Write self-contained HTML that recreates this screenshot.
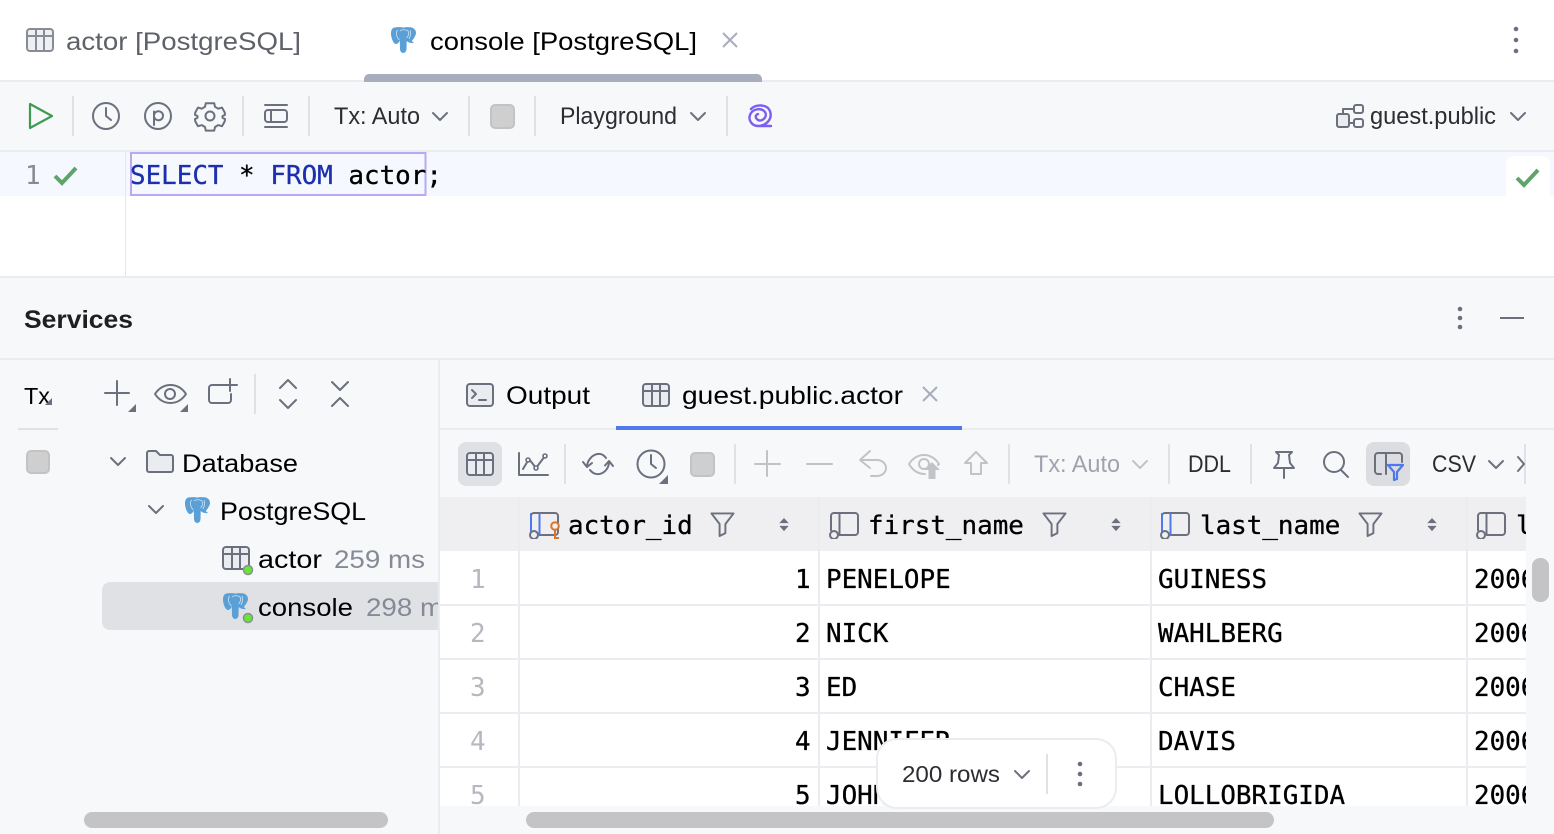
<!DOCTYPE html>
<html><head><meta charset="utf-8"><title>console</title>
<style>
html,body{margin:0;padding:0;background:#fff;width:1554px;height:834px;overflow:hidden}
svg{display:block}
.u{font-family:"Liberation Sans",sans-serif;font-size:25px}
.t{font-family:"Liberation Sans",sans-serif;font-size:24.5px;fill:#2b2d30}
.m{font-family:"DejaVu Sans Mono","Liberation Mono",monospace;font-size:25.9px;fill:#000;stroke:#000;stroke-width:.3}
.n{font-family:"DejaVu Sans Mono","Liberation Mono",monospace;font-size:25.9px;fill:#b6b8c0}
.i{fill:none;stroke:#6c707e;stroke-width:2;stroke-linecap:round;stroke-linejoin:round}
.d{fill:none;stroke:#c2c3c6;stroke-width:2;stroke-linecap:round;stroke-linejoin:round}
.sep{stroke:#dfe1e5;stroke-width:2}
</style></head>
<body>
<svg width="1554" height="834" viewBox="0 0 1554 834" xmlns="http://www.w3.org/2000/svg">
<defs>
<symbol id="el" viewBox="0 0 25 26">
<path fill="#5a9fd6" d="M6 .3C2 0 0 2 0 6.500 0 11 2.500 17 5 17 7 17 8 15 8.800 13.500L9 22c.2 5.300 6.300 5.300 6.500 0l.2-8c2 2 5 2.500 7.500 2-1.200-.6-2-1.500-2.300-2.300C23 11.500 25 8 25 6 25 2.500 22 0 18.500.3 16 0 14 0 12.500.6 10.500 0 8.500 0 6 .3z"/>
<path fill="none" stroke="#cfe3f4" stroke-width=".8" d="M6.500 3c-2 3-1 7.500 2 10M9 4c1.500-1.500 6-1.800 8 0 1.500 2 .5 5-1.500 7M19 3c1.500 3 .5 6-1 9"/>
</symbol>
<symbol id="tb" viewBox="0 0 28 24">
<rect x="1" y="1" width="26" height="22" rx="3" fill="#ebecf0" stroke="#6c707e" stroke-width="2"/>
<path d="M1 8h26M10 1v22M18 1v22" stroke="#6c707e" stroke-width="2" fill="none"/>
</symbol>
<symbol id="col" viewBox="0 0 32 28">
<path d="M4 20V5a3 3 0 0 1 3-3h21a3 3 0 0 1 3 3v16a3 3 0 0 1-3 3H12" fill="none" stroke="#6c707e" stroke-width="2"/>
<path d="M12.500 2v22" fill="none" stroke="#6c707e" stroke-width="2"/>
<circle cx="7" cy="24" r="4" fill="#efeff1" stroke="#6c707e" stroke-width="2"/>
</symbol>
<symbol id="fl" viewBox="0 0 26 26">
<path d="M1.500 1.500h23L16 12.500v9.500l-6 3V12.500z" fill="none" stroke="#6c707e" stroke-width="2" stroke-linejoin="round"/>
</symbol>
<symbol id="so" viewBox="0 0 12 16">
<path d="M6 1l5 5.500H1zM6 15l5-5.500H1z" fill="#6c707e"/>
</symbol>
</defs>

<!-- top tabs -->
<rect width="1554" height="834" fill="#fff"/>
<rect y="80" width="1554" height="2" fill="#ebecf0"/>
<use href="#tb" x="26" y="28" width="28" height="24" opacity=".8"/>
<text class="u" x="66" y="50" fill="#5f6169" textLength="235" lengthAdjust="spacingAndGlyphs">actor [PostgreSQL]</text>
<use href="#el" x="391" y="27" width="25" height="26"/>
<text class="u" x="430" y="50" fill="#000" textLength="267" lengthAdjust="spacingAndGlyphs">console [PostgreSQL]</text>
<path d="M723 33l14 14M737 33l-14 14" stroke="#a8adbd" stroke-width="2" fill="none"/>
<path d="M364 82v-3a5 5 0 0 1 5-5h388a5 5 0 0 1 5 5v3z" fill="#a8adbd"/>
<g fill="#6c707e"><circle cx="1516" cy="29" r="2.300"/><circle cx="1516" cy="40" r="2.300"/><circle cx="1516" cy="51" r="2.300"/></g>

<!-- editor toolbar -->
<rect y="82" width="1554" height="68" fill="#f7f8fa"/>
<rect y="150" width="1554" height="2" fill="#ebecf0"/>
<path d="M30 104l22 12-22 12z" fill="none" stroke="#3f9a52" stroke-width="2.200" stroke-linejoin="round"/>
<g class="sep"><path d="M73 96v40M243 96v40M309 96v40M469 96v40M535 96v40M727 96v40"/></g>
<circle class="i" cx="106" cy="116" r="13"/><path class="i" d="M106 108v8l5 4"/>
<circle class="i" cx="158" cy="116" r="13"/><path class="i" d="M154 125v-13.500M154 115.500a4.500 4.500 0 1 1 0 .5"/>
<path class="i" d="M205.800 103.200l-.8 3.600-3.200 1.900-3.800-1.100-1.200 2.100-1.600 3-.2 2.100 2.500 1.200v1.800l-2.500 1.200 .2 2.100 1.600 3 1.200 2.100 3.800-1.100 3.200 1.900.8 3.600h8.400l.8-3.600 3.200-1.900 3.800 1.100 1.200-2.100 1.600-3 .2-2.100-2.500-1.200v-1.800l2.500-1.200-.2-2.100-1.600-3-1.200-2.100-3.800 1.100-3.200-1.900-.8-3.600z"/>
<circle class="i" cx="210" cy="116" r="4.500"/>
<path class="i" d="M265 105h22M265 127h22"/><rect class="i" x="265" y="110" width="22" height="12" rx="3"/><path class="i" d="M271 110v12"/>
<text class="t" x="334" y="124" textLength="86" lengthAdjust="spacingAndGlyphs">Tx: Auto</text>
<path class="i" d="M433 113l7 7 7-7"/>
<rect x="491" y="105" width="23" height="23" rx="4" fill="#cfcfcf" stroke="#c2c3c6" stroke-width="2"/>
<text class="t" x="560" y="124" textLength="117" lengthAdjust="spacingAndGlyphs">Playground</text>
<path class="i" d="M691 113l7 7 7-7"/>
<path d="M751 109C756 104 767 104 770 111 773 120 765 126 758 126 752 126 748 120 750 115 752 109 761 107 765 112 768 117 762 122 758 120 755 118 755 115 758 114M758 126L771 126" fill="none" stroke="#7c5ef0" stroke-width="2.400" stroke-linecap="round"/>
<g class="i"><rect x="1337" y="114" width="12" height="13" rx="2" fill="#ebecf0" style="fill:#ebecf0"/><rect x="1354" y="105" width="9" height="8" rx="2"/><rect x="1354" y="119" width="9" height="8" rx="2"/><path d="M1343 114v-5h11M1349 123h5"/></g>
<text class="t" x="1370" y="124" textLength="126" lengthAdjust="spacingAndGlyphs">guest.public</text>
<path class="i" d="M1511 113l7 7 7-7"/>

<!-- editor -->
<rect y="152" width="1554" height="44" fill="#f5f8fe"/>
<rect x="125" y="152" width="1" height="124" fill="#e6e7ea"/>
<text class="n" x="25" y="184" style="fill:#868a91">1</text>
<path d="M55 176l7 7 14-15" fill="none" stroke="#5fa469" stroke-width="4"/>
<rect x="131" y="153" width="294.500" height="42" fill="none" stroke="#b9a9f2" stroke-width="2"/>
<text class="m" x="130" y="184" style="fill:#1c2fae;stroke:#1c2fae">SELECT</text>
<text class="m" x="239" y="184">*</text>
<text class="m" x="270.400" y="184" style="fill:#1c2fae;stroke:#1c2fae">FROM</text>
<text class="m" x="348.400" y="184">actor</text>
<text class="m" x="426.400" y="184">;</text>
<path d="M1506 196v-32a8 8 0 0 1 8-8h28a8 8 0 0 1 8 8v32z" fill="#fff"/>
<path d="M1517 178l7 7 14-15" fill="none" stroke="#5fa469" stroke-width="4"/>

<!-- services header -->
<rect y="276" width="1554" height="558" fill="#f7f8fa"/>
<rect y="276" width="1554" height="2" fill="#ebecf0"/>
<rect y="358" width="1554" height="2" fill="#ebecf0"/>
<text class="u" x="24" y="328" fill="#1e1f22" font-weight="700" textLength="109" lengthAdjust="spacingAndGlyphs">Services</text>
<g fill="#6c707e"><circle cx="1460" cy="309" r="2.300"/><circle cx="1460" cy="318" r="2.300"/><circle cx="1460" cy="327" r="2.300"/></g>
<path d="M1500 318h24" stroke="#6c707e" stroke-width="2"/>

<!-- left panel -->
<text class="t" x="24" y="404" textLength="26" lengthAdjust="spacingAndGlyphs" style="fill:#000;font-size:23px">Tx</text>
<path d="M52 398v7h-7z" fill="#6c707e"/>
<rect x="18" y="428" width="40" height="2" fill="#dfe1e5"/>
<path class="i" d="M105 393h24M117 381v24"/><path d="M136 404v8h-8z" fill="#6c707e"/>
<path class="i" d="M155 394c8-12 23-12 31 0-8 12-23 12-31 0z"/><circle class="i" cx="170" cy="394" r="5"/><path d="M188 404v8h-8z" fill="#6c707e"/>
<path class="i" d="M226 385h-14a3 3 0 0 0-3 3v12a3 3 0 0 0 3 3h16a3 3 0 0 0 3-3v-6M230 379v12M224 385h13"/>
<path class="sep" d="M255 374v40"/>
<path class="i" d="M280 388l8-8 8 8M280 400l8 8 8-8"/>
<path class="i" d="M332 382l8 8 8-8M332 406l8-8 8 8"/>
<rect x="27" y="451" width="22" height="22" rx="4" fill="#cfcfcf" stroke="#c2c3c6" stroke-width="2"/>
<path class="i" d="M111 458l7 7 7-7"/>
<path class="i" style="fill:#ebecf0" d="M147 470v-17a2 2 0 0 1 2-2h7l4 4h11a2 2 0 0 1 2 2v13a2 2 0 0 1-2 2h-22a2 2 0 0 1-2-2z"/>
<text class="u" x="182" y="472" fill="#000" textLength="116" lengthAdjust="spacingAndGlyphs">Database</text>
<path class="i" d="M149 506l7 7 7-7"/>
<use href="#el" x="185" y="497" width="25" height="26"/>
<text class="u" x="220" y="520" fill="#000" textLength="146" lengthAdjust="spacingAndGlyphs">PostgreSQL</text>
<use href="#tb" x="222" y="546" width="28" height="24"/>
<circle cx="248" cy="570" r="4.500" fill="#66e832" stroke="#8a8d96" stroke-width="1.500"/>
<text class="u" x="258" y="568" fill="#000" textLength="64" lengthAdjust="spacingAndGlyphs">actor</text>
<text class="u" x="334" y="568" fill="#868a96" textLength="91" lengthAdjust="spacingAndGlyphs">259 ms</text>
<path d="M110 582h330v48H110a8 8 0 0 1-8-8v-32a8 8 0 0 1 8-8z" fill="#dfe1e5"/>
<use href="#el" x="223" y="593" width="25" height="26"/>
<circle cx="248" cy="618" r="4.500" fill="#66e832" stroke="#8a8d96" stroke-width="1.500"/>
<text class="u" x="258" y="616" fill="#000" textLength="95" lengthAdjust="spacingAndGlyphs">console</text>
<text class="u" x="366" y="616" fill="#868a96" textLength="91" lengthAdjust="spacingAndGlyphs">298 ms</text>
<rect x="84" y="812" width="304" height="16" rx="8" fill="#c4c4c6"/>

<!-- right panel -->
<rect x="438" y="360" width="1116" height="474" fill="#f7f8fa"/>
<rect x="438" y="360" width="2" height="474" fill="#ebecf0"/>
<rect x="440" y="428" width="1114" height="2" fill="#ebecf0"/>
<rect x="616" y="426" width="346" height="4" fill="#4f78ec"/>
<rect class="i" x="467" y="384" width="26" height="22" rx="3" style="fill:#ebecf0"/><path class="i" d="M472 390l4 4-4 4M479 400h7"/>
<text class="u" x="506" y="404" fill="#000" textLength="84" lengthAdjust="spacingAndGlyphs">Output</text>
<use href="#tb" x="642" y="383" width="28" height="24"/>
<text class="u" x="682" y="404" fill="#000" textLength="221" lengthAdjust="spacingAndGlyphs">guest.public.actor</text>
<path d="M923 387l14 14M937 387l-14 14" stroke="#a8adbd" stroke-width="2" fill="none"/>

<!-- right toolbar -->
<rect x="458" y="442" width="44" height="44" rx="8" fill="#dfe1e5"/>
<use href="#tb" x="466" y="452" width="28" height="24"/>
<path class="i" d="M519 453v22h29M523 469l6-10 7 9 9-12"/><g fill="#f7f8fa" stroke="#6c707e" stroke-width="1.600"><circle cx="528" cy="460" r="2"/><circle cx="536" cy="468" r="2"/><circle cx="545" cy="456" r="2"/></g>
<g class="sep"><path d="M565 444v40M735 444v40M1009 444v40M1169 444v40M1251 444v40M1525 444v40"/></g>
<path class="i" d="M583 462l4 5 5-4M587 466C588 456 600 449 606 458M613 466l-4-5-4 4.500M609 462C609 472 597 479 590 470"/>
<circle class="i" cx="651" cy="464" r="13.500"/><path class="i" d="M651 455v9l5 4"/><path d="M668 475v9h-9z" fill="#6c707e"/>
<rect x="691" y="453" width="23" height="23" rx="4" fill="#cfcfcf" stroke="#c2c3c6" stroke-width="2"/>
<path class="d" d="M755 464h25M767 451v25M807 464h25"/>
<path class="d" d="M870 451l-10 9 10 8M860 460h17a9 8 0 0 1 0 16h-6"/>
<path class="d" d="M909 464c8-12 22-12 30 0l-1 1M909 464c4 7 10 10 16 10"/><circle class="d" cx="924" cy="464" r="5"/>
<path d="M932 462l8 8h-4.500v9h-7v-9H924z" fill="#c2c3c6"/>
<path class="d" d="M976 452l11 11h-6v11h-10v-11h-6z"/>
<text class="t" x="1034" y="472" style="fill:#a0a3ad" textLength="86" lengthAdjust="spacingAndGlyphs">Tx: Auto</text>
<path class="d" d="M1133 461l7 7 7-7"/>
<text class="t" x="1188" y="472" textLength="43" lengthAdjust="spacingAndGlyphs">DDL</text>
<path class="i" d="M1276 452h16l-3 3 1 8 4 5h-20l4-5 1-8zM1284 468v10"/>
<circle class="i" cx="1334" cy="462" r="10"/><path class="i" d="M1341 470l7 7"/>
<rect x="1366" y="442" width="44" height="44" rx="8" fill="#dcdde0"/>
<path class="i" d="M1381 474h-3a3 3 0 0 1-3-3v-15a3 3 0 0 1 3-3h21a3 3 0 0 1 3 3v6M1386 453v21"/>
<path d="M1388 465h15l-6 7v7l-3 1v-8z" fill="#dcdde0" stroke="#4f78ec" stroke-width="2.200" stroke-linejoin="round"/>
<text class="t" x="1432" y="472" textLength="44" lengthAdjust="spacingAndGlyphs">CSV</text>
<path class="i" d="M1489 461l7 7 7-7"/>
<path class="i" d="M1518 457l6 7-6 7"/>

<!-- table -->
<rect x="440" y="497" width="1086" height="309" fill="#fff"/>
<rect x="440" y="497" width="1086" height="54" fill="#efeff1"/>
<g fill="#ebecf0">
<rect x="518" y="497" width="2" height="309"/><rect x="818" y="497" width="2" height="309"/><rect x="1150" y="497" width="2" height="309"/><rect x="1466" y="497" width="2" height="309"/>
<rect x="440" y="604" width="1086" height="2"/><rect x="440" y="658" width="1086" height="2"/><rect x="440" y="712" width="1086" height="2"/><rect x="440" y="766" width="1086" height="2"/>
</g>
<!-- header -->
<use href="#col" x="527" y="511" width="32" height="28"/>
<path d="M531 513v19M539.500 513v22" stroke="#4f78ec" stroke-width="2" fill="none"/>
<circle cx="555" cy="526" r="3.800" fill="#efeff1" stroke="#d9762c" stroke-width="2"/><path d="M555 530v9M555 538h4" stroke="#d9762c" stroke-width="2" fill="none"/>
<text class="m" x="568" y="534">actor_id</text>
<use href="#fl" x="710" y="512" width="25" height="25"/>
<use href="#so" x="778" y="517" width="12" height="15"/>
<use href="#col" x="827" y="511" width="32" height="28"/>
<text class="m" x="868" y="534">first_name</text>
<use href="#fl" x="1042" y="512" width="25" height="25"/>
<use href="#so" x="1110" y="517" width="12" height="15"/>
<use href="#col" x="1158" y="511" width="32" height="28"/>
<path d="M1162 513v19M1170.500 513v22" stroke="#4f78ec" stroke-width="2" fill="none"/>
<text class="m" x="1200" y="534">last_name</text>
<use href="#fl" x="1358" y="512" width="25" height="25"/>
<use href="#so" x="1426" y="517" width="12" height="15"/>
<use href="#col" x="1474" y="511" width="32" height="28"/>
<text class="m" x="1516" y="534">last_update</text>
<!-- rows -->
<text class="n" x="470" y="588">1</text><text class="m" x="795" y="588">1</text><text class="m" x="826" y="588">PENELOPE</text><text class="m" x="1158" y="588">GUINESS</text><text class="m" x="1474" y="588">2006-02-15</text>
<text class="n" x="470" y="642">2</text><text class="m" x="795" y="642">2</text><text class="m" x="826" y="642">NICK</text><text class="m" x="1158" y="642">WAHLBERG</text><text class="m" x="1474" y="642">2006-02-15</text>
<text class="n" x="470" y="696">3</text><text class="m" x="795" y="696">3</text><text class="m" x="826" y="696">ED</text><text class="m" x="1158" y="696">CHASE</text><text class="m" x="1474" y="696">2006-02-15</text>
<text class="n" x="470" y="750">4</text><text class="m" x="795" y="750">4</text><text class="m" x="826" y="750">JENNIFER</text><text class="m" x="1158" y="750">DAVIS</text><text class="m" x="1474" y="750">2006-02-15</text>
<text class="n" x="470" y="804">5</text><text class="m" x="795" y="804">5</text><text class="m" x="826" y="804">JOHNNY</text><text class="m" x="1158" y="804">LOLLOBRIGIDA</text><text class="m" x="1474" y="804">2006-02-15</text>
<!-- clip masks -->
<rect x="1526" y="497" width="28" height="337" fill="#f7f8fa"/>
<rect x="440" y="806" width="1114" height="28" fill="#f7f8fa"/>
<rect x="1532" y="558" width="17" height="44" rx="8" fill="#c4c4c6"/>
<rect x="526" y="812" width="748" height="16" rx="8" fill="#c4c4c6"/>
<!-- popup -->
<rect x="877" y="739" width="239" height="69" rx="20" fill="#fff" stroke="#ebecf0" stroke-width="2"/>
<text class="t" x="902" y="782" textLength="98" lengthAdjust="spacingAndGlyphs" style="font-size:23.5px">200 rows</text>
<path class="i" d="M1015 771l7 7 7-7"/>
<path class="sep" d="M1047 754v40"/>
<g fill="#6c707e"><circle cx="1080" cy="764" r="2.300"/><circle cx="1080" cy="774" r="2.300"/><circle cx="1080" cy="784" r="2.300"/></g>
</svg>
</body></html>
